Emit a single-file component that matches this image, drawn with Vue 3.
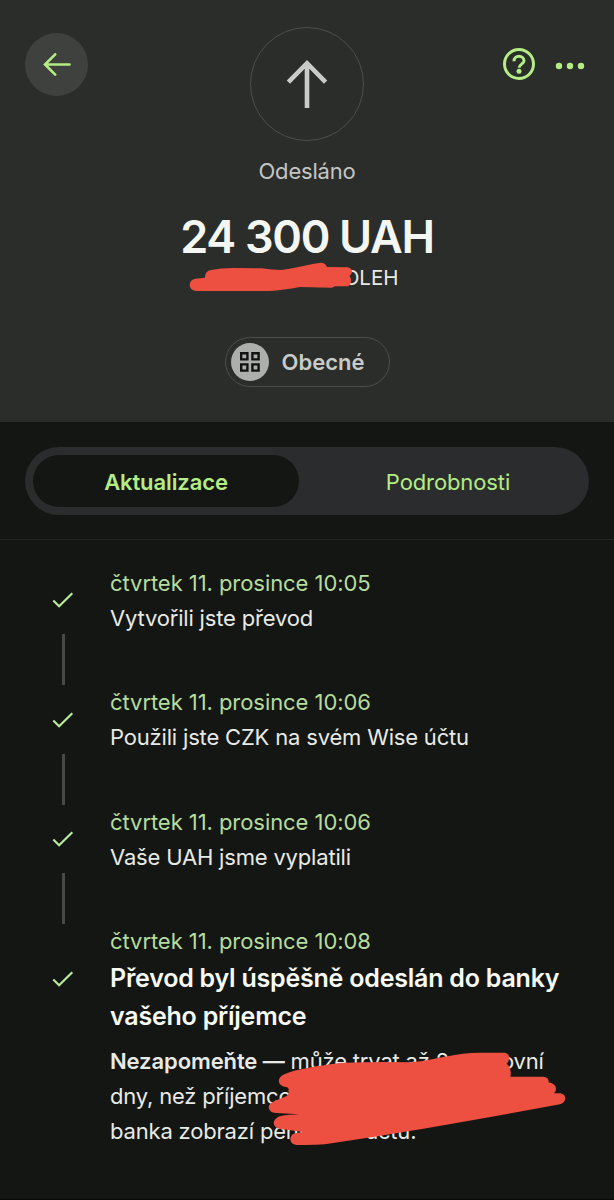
<script setup>
import { ref } from "vue";

const tabs = ["Aktualizace", "Podrobnosti"];
const activeTab = ref("Aktualizace");

const steps = [
  { date: "čtvrtek 11. prosince 10:05", text: "Vytvořili jste převod" },
  { date: "čtvrtek 11. prosince 10:06", text: "Použili jste CZK na svém Wise účtu" },
  { date: "čtvrtek 11. prosince 10:06", text: "Vaše UAH jsme vyplatili" },
];
</script>

<template>
  <div class="app">
    <header class="header">
      <div class="topbar">
        <button class="back">
          <svg width="28" height="24" viewBox="0 0 28 24">
            <path d="M26.500 11.500H2M12.200 1.300L2 11.500l10.200 10.200" />
          </svg>
        </button>
        <div class="avatar">
          <svg width="44" height="50" viewBox="0 0 44 50">
            <path d="M22 49V4M3.400 23.200L22 4.200l18.600 19" />
          </svg>
        </div>
        <div class="actions">
          <svg class="help" width="32" height="32" viewBox="0 0 32 32">
            <circle cx="16" cy="16" r="14.500" />
            <path d="M11 13.200C11 10.200 13.200 8.300 16 8.300s5 1.900 5 4.500c0 3.300-4.900 3.400-4.900 7" />
            <circle class="dot" cx="16" cy="23.300" r="2.500" />
          </svg>
          <svg class="more" width="30" height="8" viewBox="0 0 30 8">
            <circle cx="4" cy="4" r="3.200" />
            <circle cx="15" cy="4" r="3.200" />
            <circle cx="26" cy="4" r="3.200" />
          </svg>
        </div>
      </div>
      <p class="status">Odesláno</p>
      <h1>24 300 UAH</h1>
      <div class="name">
        <span>OLEH</span>
        <svg class="scribble" width="164" height="30" viewBox="117 186 492 90">
          <path
            d="M136 236L165 233C166 219 171 212 184 210Q210 204 250 204L335 205Q365 210 395 210Q430 205 460 198Q490 190 512 188Q526 188 531 201L592 202Q606 204 606 215Q606 223 598 228Q606 236 602 248Q600 259 588 259L555 259L546 263L450 261Q400 270 360 273L138 273Q119 270 119 254Q120 239 136 236Z"
          />
        </svg>
      </div>
      <button class="category">
        <span class="category-icon">
          <svg width="20" height="20" viewBox="0 0 20 20">
            <path d="M1.200 1.200h6.200v6.200H1.200zM12.400 1.200h6.200v6.200h-6.200zM1.200 12.400h6.200v6.200H1.200zM12.400 12.400h6.200v6.200h-6.200z" />
          </svg>
        </span>
        Obecné
      </button>
    </header>

    <div class="tabs-wrap">
      <nav class="tabs">
        <button
          v-for="tab in tabs"
          :key="tab"
          :class="{ active: tab === activeTab }"
          @click="activeTab = tab"
        >
          {{ tab }}
        </button>
      </nav>
    </div>

    <ul class="timeline">
      <li v-for="(step, i) in steps" :key="i" class="step">
        <div class="marker">
          <svg class="check" width="22" height="16" viewBox="0 0 22 16">
            <path d="M1.300 8.500l5.800 5.800L20.300 1.200" />
          </svg>
          <span class="line"></span>
        </div>
        <div>
          <p class="date">{{ step.date }}</p>
          <p class="text">{{ step.text }}</p>
        </div>
      </li>
      <li class="step last">
        <div class="marker">
          <svg class="check" width="22" height="16" viewBox="0 0 22 16">
            <path d="M1.300 8.500l5.800 5.800L20.300 1.200" />
          </svg>
        </div>
        <div>
          <p class="date">čtvrtek 11. prosince 10:08</p>
          <h2>Převod byl úspěšně odeslán do banky<br />vašeho příjemce</h2>
          <div class="note">
            <p>
              <strong>Nezapomeňte —</strong> může trvat až 2 pracovní<br />
              dny, než příjemcova<br />
              banka zobrazí peníze na účtu.
            </p>
            <svg class="scribble" width="300" height="97" viewBox="48 90 900 291">
              <path
                d="M108 201C82 199 80 173 100 164C135 147 210 137 270 129Q380 124 484 127C560 118 620 98 690 98L762 98C778 98 784 117 770 131Q787 145 781 170L880 170Q897 171 896 187Q919 192 918 208Q918 215 912 220L928 220C950 220 953 246 930 253Q730 290 520 326Q370 351 225 373Q190 376 140 375Q121 373 121 358Q122 343 135 340L160 336L100 328C66 328 61 298 92 288Q115 284 148 283L78 279Q56 277 56 260Q58 249 76 242L110 228Q119 222 115 212Q119 203 108 201Z"
              />
            </svg>
          </div>
        </div>
      </li>
    </ul>
  </div>
</template>

<style>
body {
  background-color: #141613;
}
</style>

<style scoped>
.app {
  height: 1200px;
  box-sizing: border-box;
  overflow: hidden;
  background-color: #141613;
  border-bottom: 1px solid #090a09;
  color: #e8eae6;
  font-family: Inter, "Liberation Sans", sans-serif;
  font-size: 22px;
}
button {
  margin: 0;
  padding: 0;
  border: none;
  background: none;
  font: inherit;
}
p,
h1,
h2,
ul {
  margin: 0;
  padding: 0;
}
svg {
  display: block;
  fill: none;
}
.header {
  box-sizing: border-box;
  height: 422px;
  padding: 27px 25px 0;
  background-color: #2b2d2b;
  display: flex;
  flex-direction: column;
  align-items: center;
}
.topbar {
  width: 100%;
  display: grid;
  grid-template-columns: 1fr 114px 1fr;
  align-items: start;
}
.back {
  width: 63px;
  height: 63px;
  margin-top: 6px;
  border-radius: 50%;
  background-color: #3f413f;
  display: flex;
  align-items: center;
  justify-content: center;
}
.back svg {
  stroke: #b4ec85;
  stroke-width: 2.6;
  stroke-linecap: round;
}
.avatar {
  box-sizing: border-box;
  width: 114px;
  height: 114px;
  border: 1.5px solid #4c4e4c;
  border-radius: 50%;
  display: flex;
  align-items: center;
  justify-content: center;
}
.avatar svg {
  stroke: #c9cbc9;
  stroke-width: 4.6;
}
.actions {
  display: flex;
  align-items: center;
  justify-content: flex-end;
  gap: 20px;
  margin: 21px 4px 0 0;
}
.help {
  stroke: #b4ec85;
  stroke-width: 3;
}
.help .dot {
  fill: #b4ec85;
  stroke: none;
}
.more {
  margin-top: 3px;
  fill: #b4ec85;
}
.status {
  margin-top: 15px;
  line-height: 30px;
  letter-spacing: -0.2px;
  color: #c3c5c3;
}
h1 {
  margin-top: 23px;
  line-height: 56px;
  font-size: 45px;
  font-weight: 600;
  letter-spacing: -1.3px;
  color: #f4f6f2;
}
.name {
  position: relative;
  width: 183px;
  height: 30px;
  margin-top: -2px;
  line-height: 30px;
  font-size: 20.5px;
  text-align: right;
}
.scribble {
  position: absolute;
  fill: #ed4f40;
}
.name .scribble {
  left: -26.5px;
  top: -1px;
}
.category {
  box-sizing: border-box;
  width: 165px;
  height: 50px;
  margin-top: 44px;
  padding-left: 5px;
  border: 1.5px solid #4c4e4c;
  border-radius: 25px;
  display: flex;
  align-items: center;
  gap: 13px;
  color: #c9cbc9;
  font-weight: 600;
}
.category-icon {
  width: 38px;
  height: 38px;
  border-radius: 50%;
  background-color: #adafad;
  display: flex;
  align-items: center;
  justify-content: center;
}
.category-icon svg {
  stroke: #111211;
  stroke-width: 2.4;
}
.tabs-wrap {
  padding: 25px 25px 24px;
  border-bottom: 1px solid #232523;
}
.tabs {
  box-sizing: border-box;
  height: 68px;
  padding: 8px;
  border-radius: 34px;
  background-color: #2a2c2d;
  display: grid;
  grid-template-columns: 266px 1fr;
  gap: 16px;
}
.tabs button {
  padding-top: 2px;
  border-radius: 26px;
  letter-spacing: -0.1px;
  color: #b4ec85;
}
.tabs .active {
  background-color: #141613;
  font-weight: 600;
}
.timeline {
  list-style: none;
  padding: 25.5px 25px 0 52px;
}
.step {
  height: 119.6px;
  display: grid;
  grid-template-columns: 22px 1fr;
  column-gap: 36px;
  line-height: 35px;
  letter-spacing: -0.18px;
}
.marker {
  display: flex;
  flex-direction: column;
  align-items: center;
  padding-top: 26.5px;
}
.check {
  stroke: #b9e99c;
  stroke-width: 2.2;
}
.line {
  width: 3px;
  height: 51px;
  margin-top: 26px;
  background-color: #484a48;
}
.date {
  letter-spacing: -0.06px;
  color: #b5dd9d;
}
.last {
  height: auto;
}
.last .marker {
  padding-top: 46.5px;
}
h2 {
  line-height: 38px;
  font-size: 25px;
  font-weight: 600;
  letter-spacing: -0.22px;
  color: #f8faf6;
  white-space: nowrap;
}
.note {
  position: relative;
  margin-top: 8.5px;
  white-space: nowrap;
}
.note strong {
  font-weight: 600;
  letter-spacing: -0.1px;
}
.note .scribble {
  left: 156px;
  top: 6.5px;
}
</style>
